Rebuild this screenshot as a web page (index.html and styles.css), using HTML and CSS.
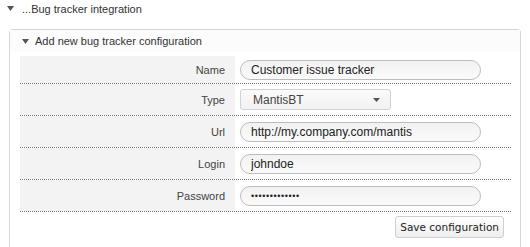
FILE: index.html
```html
<!DOCTYPE html>
<html lang="en">
<head>
    <meta charset="UTF-8">
    <title>Bug tracker integration</title>
    <link rel="stylesheet" href="styles.css">
</head>
<body>
    <div class="section">
        <div class="section-title">
            <svg class="caret" width="7" height="5" viewBox="0 0 7 5"><path d="M0 0h7L3.5 5z" fill="#555"></path></svg>
            <span>...Bug tracker integration</span>
        </div>

        <div class="panel">
            <div class="panel-title">
                <svg class="caret" width="7" height="5" viewBox="0 0 7 5"><path d="M0 0h7L3.5 5z" fill="#555"></path></svg>
                <span>Add new bug tracker configuration</span>
            </div>

            <form class="config-form">
                <div class="row">
                    <label class="row-label" for="name">Name</label>
                    <div class="row-field"><input class="text-input" id="name" type="text" value="Customer issue tracker"></div>
                </div>
                <div class="row">
                    <label class="row-label">Type</label>
                    <div class="row-field">
                        <div class="select">
                            <span>MantisBT</span>
                            <svg width="7" height="4" viewBox="0 0 7 4"><path d="M0 0h7L3.5 4z" fill="#555"></path></svg>
                        </div>
                    </div>
                </div>
                <div class="row">
                    <label class="row-label" for="url">Url</label>
                    <div class="row-field"><input class="text-input" id="url" type="text" value="http://my.company.com/mantis"></div>
                </div>
                <div class="row">
                    <label class="row-label" for="login">Login</label>
                    <div class="row-field"><input class="text-input" id="login" type="text" value="johndoe"></div>
                </div>
                <div class="row">
                    <label class="row-label" for="password">Password</label>
                    <div class="row-field"><input class="text-input password" id="password" type="password" value="secretpasswd1"></div>
                </div>

                <div class="actions">
                    <button type="button" class="btn">Save configuration</button>
                </div>
            </form>
        </div>
    </div>
</body>
</html>
```

FILE: styles.css
```css
* {
    box-sizing: border-box;
    margin: 0;
    padding: 0;
}

html, body {
    height: 247px;
    overflow: hidden;
}

body {
    font-family: "Liberation Sans", Arial, sans-serif;
    font-size: 11px;
    color: #333;
    background: #fff;
}

.section-title {
    display: flex;
    align-items: center;
    height: 17px;
    padding-left: 7px;
}

.caret {
    margin-right: 8px;
}

.panel {
    margin: 12px 9px 0 9px;
    height: 218px;
    border: 1px solid #d6d6d6;
    border-bottom: none;
    border-radius: 4px 4px 0 0;
}

.panel-title {
    display: flex;
    align-items: center;
    height: 22px;
    padding-left: 12px;
    background: #fcfcfc;
}

.panel-title .caret {
    margin-right: 6px;
}

.config-form {
    margin: 4px 9px 0 10px;
}

.row {
    display: flex;
    height: 32px;
    border-bottom: 1px dotted #777;
}

.row:first-child {
    height: 28px;
}

.row-label {
    width: 215px;
    background: #f3f3f3;
    padding-right: 10px;
    display: flex;
    align-items: center;
    justify-content: flex-end;
    color: #444;
}

.row-field {
    flex: 1;
    display: flex;
    align-items: center;
    padding-left: 5px;
}

.text-input {
    width: 241px;
    height: 20px;
    border: 1px solid #bdbdbd;
    border-radius: 10px;
    background: linear-gradient(#f2f2f2, #fbfbfb);
    padding: 0 10px;
    font-family: "Liberation Sans", Arial, sans-serif;
    font-size: 12px;
    color: #222;
    outline: none;
}

.text-input.password {
    font-size: 9px;
    letter-spacing: 0.6px;
}

.select {
    width: 151px;
    height: 21px;
    border: 1px solid #d2d2d2;
    border-radius: 3px;
    background: linear-gradient(#fbfbfb, #f1f1f1);
    display: flex;
    align-items: center;
    justify-content: space-between;
    padding: 0 10px 0 12px;
    font-size: 12px;
    color: #444;
}

.actions {
    display: flex;
    justify-content: flex-end;
    padding: 4px 7px 0 0;
}

.btn {
    height: 22px;
    padding: 0 4px;
    border: 1px solid #cfcfcf;
    border-radius: 3px;
    background: linear-gradient(#ffffff, #eeeeee);
    font-family: "DejaVu Sans", sans-serif;
    font-size: 10.5px;
    color: #222;
}
```
